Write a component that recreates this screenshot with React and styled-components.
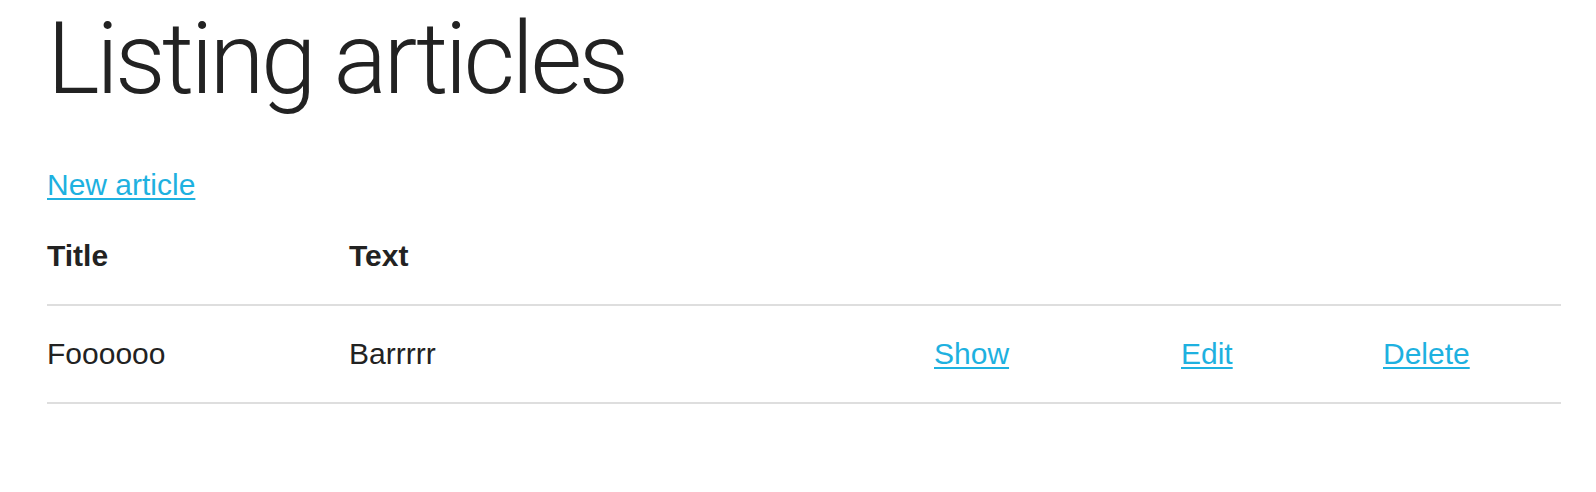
import React from "react";
import styled, { createGlobalStyle } from "styled-components";

const Global = createGlobalStyle`
  html, body { margin: 0; padding: 0; background: #fff; }
  body { font-family: "Liberation Sans", Arial, sans-serif; color: #222; }
`;

const Page = styled.div`
  padding: 9px 35px 0 47px;
`;

const Heading = styled.h1`
  margin: 0;
  font-family: Roboto, "Liberation Sans", sans-serif;
  font-weight: 300;
  font-size: 100px;
  line-height: 100px;
  letter-spacing: -3.6px;
  color: #222;
`;

const Para = styled.p`
  margin: 53px 0 0;
  font-size: 30px;
  line-height: 45px;
`;

const Link = styled.a`
  color: #1eb1e0;
  text-decoration: underline;
  text-decoration-thickness: 2px;
  text-underline-offset: 3px;
  cursor: pointer;
`;

const Table = styled.table`
  margin-top: 1px;
  width: 1514px;
  border-collapse: collapse;
  table-layout: fixed;
  font-size: 30px;
`;

const HeadCell = styled.th`
  text-align: left;
  font-weight: 700;
  padding: 0;
  height: 96px;
  vertical-align: middle;
  color: #222;
`;

const Row = styled.tr`
  border-top: 2px solid #dedede;
  border-bottom: 2px solid #dedede;
`;

const Cell = styled.td`
  padding: 0;
  height: 96px;
  vertical-align: middle;
  color: #222;
`;

export default function App() {
  return (
    <>
      <Global />
      <Page>
        <Heading>Listing articles</Heading>
        <Para>
          <Link>New article</Link>
        </Para>
        <Table>
          <colgroup>
            <col style={{ width: 302 }} />
            <col style={{ width: 585 }} />
            <col style={{ width: 247 }} />
            <col style={{ width: 202 }} />
            <col />
          </colgroup>
          <thead>
            <tr>
              <HeadCell>Title</HeadCell>
              <HeadCell>Text</HeadCell>
              <HeadCell colSpan={3}></HeadCell>
            </tr>
          </thead>
          <tbody>
            <Row>
              <Cell>Foooooo</Cell>
              <Cell>Barrrrr</Cell>
              <Cell><Link>Show</Link></Cell>
              <Cell><Link>Edit</Link></Cell>
              <Cell><Link>Delete</Link></Cell>
            </Row>
          </tbody>
        </Table>
      </Page>
    </>
  );
}
